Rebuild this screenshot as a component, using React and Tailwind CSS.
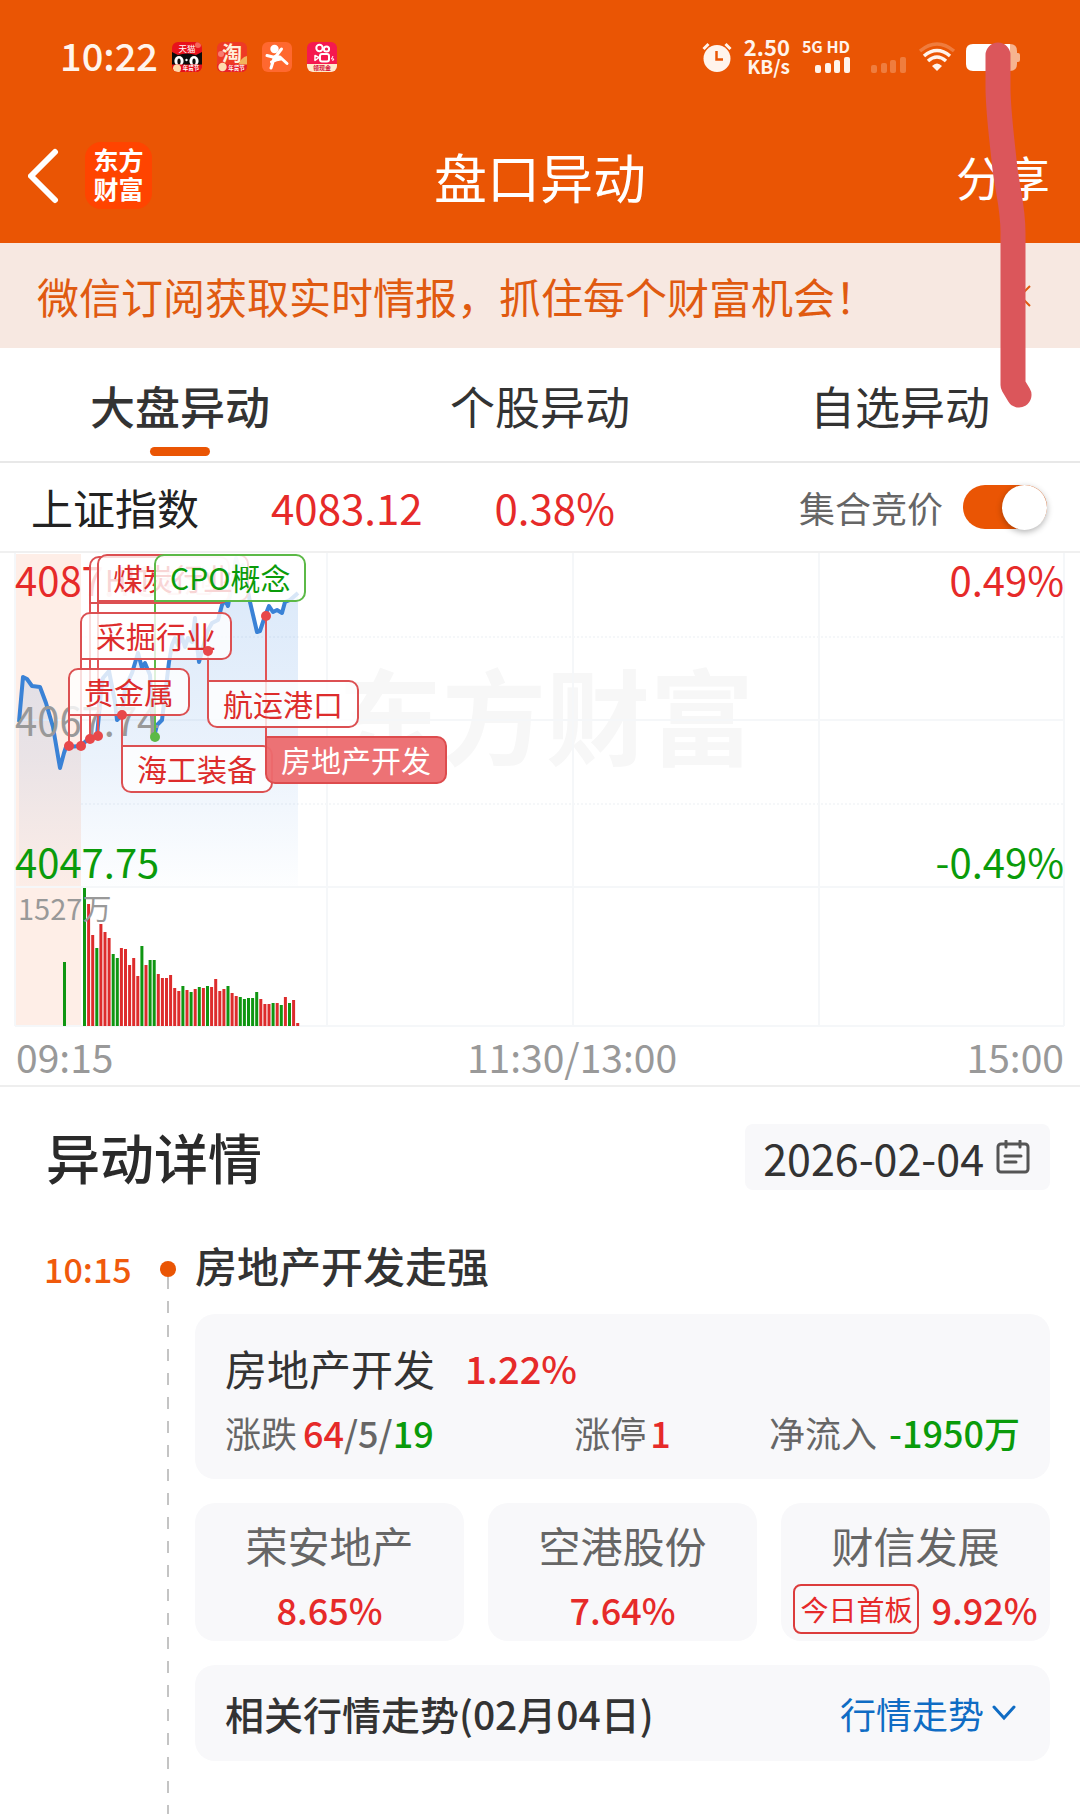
import { useState } from 'react';

const tabs = ['大盘异动', '个股异动', '自选异动'];

// Chart space is 1080 x 474, every position below is in those units
const CHART_W = 1080;
const CHART_H = 474;

const pricePoints =
  '19,169 23,124 27,126 32,133 40,134 46,150 53,174 60,215 64,200 66,194 81,193 88,186 97,183 101,139 103,125 109,118 115,149 117,167 122,162 125,135 132,120 138,100 142,115 145,110 150,122 152,159 154,184 157,172 162,167 165,142 169,109 172,92 175,85 178,92 182,84 185,94 188,85 192,89 195,65 197,92 199,109 203,95 207,79 212,70 218,67 222,52 225,47 228,53 230,42 236,5 240,19 243,12 250,49 257,79 260,78 265,63 269,53 273,59 277,57 282,60 285,49 290,47 298,40';

const volumes = [
  138, 122, 91, 78, 102, 94, 88, 72, 68, 78, 77, 61, 68, 50, 80, 61, 66, 66, 52, 48, 48, 51, 38, 35, 40, 36, 34,
  37, 39, 38, 40, 39, 47, 35, 37, 40, 33, 30, 29, 27, 28, 28, 34, 27, 22, 22, 23, 23, 21, 29, 23, 26, 3,
];
const volumeSides = 'grrgrrrggrrrrrgrggrrrrrrgrgrgrgrrrrgrrgggggrrrgrgrgrr';

const tags = [
  { name: 'HIT电池', x: 89, y: 3, dot: 186, up: true },
  { name: '煤炭行业', x: 97, y: 1, dot: 183, up: true },
  { name: 'CPO概念', x: 154, y: 1, dot: 184, up: true, green: true },
  { name: '采掘行业', x: 80, y: 59, dot: 193, up: true },
  { name: '贵金属', x: 68, y: 115, dot: 193, up: true },
  { name: '航运港口', x: 207, y: 127, dot: 98 },
  { name: '海工装备', x: 121, y: 192, dot: 162 },
  { name: '房地产开发', x: 265, y: 183, dot: 63, active: true },
];

const stocks = [
  { name: '荣安地产', change: '8.65%' },
  { name: '空港股份', change: '7.64%' },
  { name: '财信发展', change: '9.92%', badge: '今日首板' },
];

const AppIcons = () => (
  <div className="flex gap-[15px]">
    <svg className="w-[30px] h-[30px] rounded-md" viewBox="0 0 30 30">
      <rect width="30" height="30" fill="#e8121c" />
      <circle cx="26" cy="3" r="3" fill="#f4675d" />
      <path d="M0 10 L6 13 Q15 10 24 13 L30 10 V24 H0 Z" fill="#0b0b0b" />
      <ellipse cx="7" cy="19" rx="4.6" ry="5" fill="#fff" />
      <ellipse cx="22" cy="19" rx="4.6" ry="5" fill="#fff" />
      <ellipse cx="7" cy="19.500" rx="1.600" ry="3" fill="#0b0b0b" />
      <ellipse cx="22" cy="19.500" rx="1.600" ry="3" fill="#0b0b0b" />
      <circle cx="14.500" cy="18" r="1.200" fill="#fff" />
      <path d="M0 22.500 H30 V30 H0 Z" fill="#e60f1a" />
      <circle cx="5" cy="26.500" r="4" fill="#ffd9a8" />
      <text x="15" y="10" textAnchor="middle" fontSize="8.500" fill="#fff">天猫</text>
      <text x="19" y="28" textAnchor="middle" fontSize="5.500" fontWeight="700" fill="#fff">年货节</text>
    </svg>
    <svg className="w-[30px] h-[30px] overflow-visible" viewBox="0 0 30 30">
      <rect width="30" height="30" rx="6" fill="#ee3a25" />
      <circle cx="4" cy="12" r="3" fill="#f77d72" />
      <path d="M21 24 Q24 15 30 14 V24 Z" fill="#f2b45c" />
      <text x="15" y="19" textAnchor="middle" fontSize="20" fontWeight="700" fill="#fff1dc">淘</text>
      <path d="M0 22.500 H30 V24 Q30 30 24 30 H6 Q0 30 0 24 Z" fill="#e8202a" />
      <circle cx="5.500" cy="25" r="4.200" fill="#ffdcb0" />
      <text x="19.500" y="28" textAnchor="middle" fontSize="5.500" fontWeight="700" fill="#fff">年货节</text>
    </svg>
    <svg className="w-[30px] h-[30px] rounded-md" viewBox="0 0 30 30">
      <rect width="30" height="30" fill="#ff682f" />
      <circle cx="12.500" cy="7" r="4.200" fill="#fff" />
      <path d="M5 13.500 L13 15.500 L19.500 7 M13 14.500 L18 15 L25 21.500 M12.500 15 L9 26 M9.500 20 Q15 17 19 17" fill="none" stroke="#fff" strokeWidth="3" strokeLinecap="round" strokeLinejoin="round" />
    </svg>
    <svg className="w-[30px] h-[30px] rounded-md" viewBox="0 0 30 30">
      <rect width="30" height="30" fill="#f5194f" />
      <circle cx="12.500" cy="6" r="3.200" fill="none" stroke="#fff" strokeWidth="2" />
      <circle cx="19.500" cy="7" r="2.600" fill="none" stroke="#fff" strokeWidth="2" />
      <rect x="13" y="12" width="9" height="7.500" rx="2" fill="none" stroke="#fff" strokeWidth="2" />
      <path d="M12 15.500 L8 13.500 V18.500 Z" fill="none" stroke="#fff" strokeWidth="1.500" strokeLinejoin="round" />
      <path d="M26 14 L24.500 17 H27 L25.500 19" stroke="#fff" fill="none" />
      <path d="M0 22 H30 V30 H0 Z" fill="#ffeccb" />
      <text x="15" y="28" textAnchor="middle" fontSize="6" fontWeight="700" fill="#d3123f">领现金</text>
    </svg>
  </div>
);

const SignalBars = ({ className }) => (
  <svg className={className} viewBox="0 0 35 16" fill="#fff4ec">
    <rect x="0" y="8" width="6" height="8" rx="2" />
    <rect x="10" y="6" width="6" height="10" rx="2" />
    <rect x="19" y="3" width="6" height="13" rx="2" />
    <rect x="29" y="0" width="6" height="16" rx="2" />
  </svg>
);

const StatusBar = () => (
  <div className="flex h-[114px] items-center justify-between px-[60px] text-[#fff4ec]">
    <div className="flex items-center gap-3.5">
      <span className="pb-1 text-[38px] leading-[38px] font-medium">10:22</span>
      <AppIcons />
    </div>
    <div className="flex items-center">
      <svg className="h-[30px] w-[30px]" viewBox="0 0 30 30" fill="none">
        <circle cx="15" cy="16.500" r="13.500" fill="#fff4ec" />
        <path d="M1.500 7 L6.500 2 M28.500 7 L23.500 2" stroke="#fff4ec" strokeWidth="3" />
        <path d="M14.500 9 V17.500 H21" stroke="#ea5504" strokeWidth="2.500" />
      </svg>
      <div className="ml-3 flex flex-col items-end pb-0.5 font-bold">
        <span className="text-[22px] leading-[20px]">2.50</span>
        <span className="text-[19px] leading-[20px]">KB/s</span>
      </div>
      <div className="ml-3 flex flex-col items-end gap-1 pb-0.5">
        <span className="text-[16px] leading-[14px] font-bold">5G HD</span>
        <SignalBars className="h-4 w-[35px]" />
      </div>
      <SignalBars className="mt-4 ml-[21px] h-4 w-[35px] opacity-25" />
      <svg className="ml-3 h-[30px] w-[38px]" viewBox="0 0 38 30" fill="none" stroke="#fff4ec" strokeWidth="3.500">
        <path d="M2 9 Q19 -5 36 9" opacity="0.250" />
        <path d="M6 14 Q19 3 32 14" />
        <path d="M10 19 Q19 11 28 19" />
        <path d="M14 24 Q19 19 24 24 L19 29 Z" fill="#fff4ec" stroke="none" />
      </svg>
      <svg className="ml-2.5 h-[27px] w-[54px]" viewBox="0 0 54 27">
        <path d="M40 0 H44 Q51 0 51 7 V9 H52 Q54 9 54 11 V16 Q54 18 52 18 H51 V20 Q51 27 44 27 H40 Z" fill="#f6b490" />
        <path d="M7 0 H44 V27 H7 Q0 27 0 20 V7 Q0 0 7 0 Z" fill="#fff" />
      </svg>
    </div>
  </div>
);

const NavBar = () => (
  <div className="grid h-[129px] grid-cols-[1fr_auto_1fr] items-center px-7 pb-1.5 text-white">
    <div className="flex items-center gap-6">
      <button aria-label="返回">
        <svg className="h-[56px] w-[33px]" viewBox="0 0 33 56" fill="none" stroke="#fff" strokeWidth="6" strokeLinecap="round" strokeLinejoin="round">
          <path d="M27 4 L3 28 L27 52" />
        </svg>
      </button>
      <div className="flex h-[67px] w-[67px] flex-col items-center justify-center rounded-[16px] bg-[#ff4400] pb-1 text-[25px] leading-[29px] font-bold">
        <span>东方</span>
        <span>财富</span>
      </div>
    </div>
    <h1 className="text-[53px] leading-[60px]">盘口异动</h1>
    <button className="mr-0.5 justify-self-end text-[47px] leading-[60px]">分享</button>
  </div>
);

const Chart = () => (
  <div className="relative">
    <svg className="block w-full overflow-visible" viewBox={`0 0 ${CHART_W} ${CHART_H}`}>
      <defs>
        <linearGradient id="area" x1="0" y1="0" x2="0" y2="1">
          <stop offset="0" stopColor="#2f7fe0" stopOpacity="0.180" />
          <stop offset="0.600" stopColor="#2f7fe0" stopOpacity="0.100" />
          <stop offset="1" stopColor="#2f7fe0" stopOpacity="0.010" />
        </linearGradient>
      </defs>
      <rect x="16" y="1" width="65" height="332" fill="#feeee7" />
      <rect x="16" y="335" width="65" height="138" fill="#feeee7" />
      <text x="338" y="205" fontSize="104" fontWeight="700" fill="#f7f7f7">东方财富</text>
      <g stroke="#f5f7f9" strokeWidth="2">
        <path d="M15 0 V473 M327 0 V473 M573 0 V473 M819 0 V473 M1064 0 V473" />
        <path d="M15 167 H1064 M15 334 H1064 M15 473 H1064" />
        <path d="M81 84 H1064 M81 251 H1064" strokeDasharray="2 2" />
      </g>
      <polygon points={`${pricePoints} 298,333 19,333`} fill="url(#area)" />
      <polyline points={pricePoints} fill="none" stroke="#3a82d6" strokeWidth="4" strokeLinejoin="round" />
      <text x="15" y="43" fontSize="40" fill="#e62a29">4087.73</text>
      <text x="15" y="183" fontSize="40" fill="#999">4067.74</text>
      <text x="15" y="325" fontSize="40" fill="#0a9b0a">4047.75</text>
      <rect x="63" y="409" width="3" height="64" fill="#0f9612" />
      {volumes.map((h, i) => (
        <rect
          key={i}
          x={83 + i * 4.1}
          y={473 - h}
          width="3"
          height={h}
          fill={volumeSides[i] === 'g' ? '#0f9612' : '#dd2c2c'}
        />
      ))}
      <text x="18" y="367" fontSize="29" fill="#999">1527万</text>
      <text x="1064" y="43" fontSize="40" textAnchor="end" fill="#e62a29">0.49%</text>
      <text x="1064" y="325" fontSize="40" textAnchor="end" fill="#0a9b0a">-0.49%</text>
      {tags.map((t) => (
        <path key={t.name} d={`M${t.x + 1} ${t.y + 24} V${t.dot}`} stroke={t.green ? '#5cb947' : '#e25355'} strokeWidth="2" />
      ))}
    </svg>
    {tags.map((t) => (
      <button
        key={t.name}
        className={`absolute h-12 border-2 px-3.5 pb-0.5 text-[30px] leading-[42px] whitespace-nowrap ${
          t.up ? 'rounded-[10px] rounded-bl-none' : 'rounded-[10px] rounded-tl-none'
        } ${
          t.active
            ? 'border-[#dd4c4e] bg-[#ec6a6e]/95 text-white'
            : t.green
              ? 'border-[#5cb947] bg-white/80 text-[#0a9b0a]'
              : 'border-[#dc5052] bg-white/80 text-[#dd2c2c]'
        }`}
        style={{ left: `${(t.x / CHART_W) * 100}%`, top: `${(t.y / CHART_H) * 100}%` }}
      >
        {t.name}
      </button>
    ))}
    <svg className="pointer-events-none absolute inset-0 w-full" viewBox={`0 0 ${CHART_W} ${CHART_H}`}>
      {tags.map((t) => (
        <circle key={t.name} cx={t.x + 1} cy={t.dot} r="5" fill={t.green ? '#5cb947' : '#e8484a'} />
      ))}
    </svg>
  </div>
);

// Hand-drawn marker stroke over the top right corner
const Marker = () => (
  <svg className="pointer-events-none absolute top-0 right-0 h-[420px] w-[120px]" viewBox="0 0 120 420" fill="none">
    <path
      d="M38 55 V87 C38 110 42 140 44 160 C47 190 53 205 53 233 V385 L59 395"
      stroke="#db565b"
      strokeWidth="25"
      strokeLinecap="round"
      strokeLinejoin="round"
    />
  </svg>
);

const App = () => {
  const [tab, setTab] = useState(0);
  const [auction, setAuction] = useState(true);

  return (
    <div className="relative flex min-h-screen flex-col bg-white font-['Noto_Sans_CJK_SC',sans-serif] text-[#333]">
      <header className="bg-[#ea5504]">
        <StatusBar />
        <NavBar />
      </header>

      {/* Subscribe banner */}
      <div className="flex h-[105px] items-center justify-between bg-[#f7e8e1] pr-[49px] pl-[37px] text-[#e05a10]">
        <a href="#subscribe" className="text-[42px] leading-[60px]">微信订阅获取实时情报，抓住每个财富机会！</a>
        <button aria-label="关闭">
          <svg className="h-[22px] w-[22px]" viewBox="0 0 22 22" stroke="currentColor" strokeWidth="2">
            <path d="M1 1 L21 21 M21 1 L1 21" />
          </svg>
        </button>
      </div>

      {/* Tabs */}
      <nav className="grid h-[115px] grid-cols-3 border-b-2 border-[#e8e8e8]">
        {tabs.map((label, i) => (
          <button
            key={label}
            onClick={() => setTab(i)}
            className={`flex flex-col items-center pt-7 text-[45px] leading-[60px] ${tab === i ? 'font-medium' : ''}`}
          >
            {label}
            {tab === i && <span className="mt-[11px] h-[9px] w-[60px] rounded-full bg-[#ea5504]" />}
          </button>
        ))}
      </nav>

      {/* Index summary */}
      <div className="flex h-[90px] items-center justify-between border-b-2 border-[#f0f0f0] pr-[33px] pl-[31px]">
        <div className="flex gap-[72px] text-[42px] leading-[60px] text-[#e62a29]">
          <span className="text-[#222]">上证指数</span>
          <span>4083.12</span>
          <span>0.38%</span>
        </div>
        <label className="flex items-center gap-5 text-[36px] leading-[60px] text-[#666]">
          集合竞价
          <input
            type="checkbox"
            role="switch"
            className="peer sr-only"
            checked={auction}
            onChange={(e) => setAuction(e.target.checked)}
          />
          <span className="flex h-11 w-[84px] items-center rounded-full bg-gray-300 peer-checked:justify-end peer-checked:bg-[#ea5504]">
            <span className="h-[45px] w-[45px] rounded-full bg-white shadow-[0_2px_6px_rgba(0,0,0,0.3)]" />
          </span>
        </label>
      </div>

      <Chart />
      <div className="flex h-[60px] items-center justify-between border-b-2 border-[#eee] px-4 text-[39px] leading-[58px] text-[#999]">
        <span>09:15</span>
        <span className="ml-16">11:30/13:00</span>
        <span>15:00</span>
      </div>

      {/* Detail */}
      <div className="mb-1 flex h-[140px] items-center justify-between pr-[30px] pl-[46px]">
        <h2 className="text-[54px] leading-[60px] font-medium text-[#2a2a2a]">异动详情</h2>
        <button className="flex h-[66px] items-center gap-3 rounded-lg bg-[#f8f8fa] pr-5 pl-[18px] text-[43px] leading-[60px]">
          2026-02-04
          <svg className="h-[34px] w-[34px]" viewBox="0 0 34 34" fill="none" stroke="#555" strokeWidth="3" strokeLinecap="round">
            <rect x="2" y="4" width="30" height="28" rx="3" />
            <path d="M10 1 V7 M24 1 V7 M9 16 H25 M9 22 H20" />
          </svg>
        </button>
      </div>

      <div className="flex flex-1 pr-[30px]">
        <time className="w-[158px] shrink-0 pt-2 pl-[44px] text-[34px] leading-[60px] font-medium text-[#f05a0c]">
          10:15
        </time>
        <div className="flex w-[37px] shrink-0 flex-col items-start pt-[30px]">
          <span className="ml-[2px] h-4 w-4 rounded-full bg-[#ea5504]" />
          <svg className="ml-[9px] h-0 w-[2px] flex-1">
            <line x1="1" y1="0" x2="1" y2="100%" stroke="#c4c4c4" strokeWidth="2" strokeDasharray="12 12" />
          </svg>
        </div>
        <div className="flex min-w-0 flex-1 flex-col gap-6 pb-[53px]">
          <h3 className="h-[59px] pt-1 text-[42px] leading-[60px] font-medium">房地产开发走强</h3>

          <div className="h-[165px] rounded-[20px] bg-[#f8f8fa] px-[30px] pt-6">
            <div className="flex gap-[30px] text-[42px] leading-[60px]">
              <span>房地产开发</span>
              <span className="text-[38px] font-medium text-[#e62a29]">1.22%</span>
            </div>
            <div className="mt-1 grid grid-cols-3 text-[36px] leading-[60px] text-[#666]">
              <span className="flex gap-1.5">
                涨跌
                <span className="font-medium">
                  <span className="text-[#e62a29]">64</span>/5/<span className="text-[#0a9b0a]">19</span>
                </span>
              </span>
              <span className="flex justify-center gap-1">
                涨停<span className="font-medium text-[#e62a29]">1</span>
              </span>
              <span className="flex justify-end gap-3 whitespace-nowrap">
                净流入<span className="font-medium text-[#0a9b0a]">-1950万</span>
              </span>
            </div>
          </div>

          <div className="grid grid-cols-3 gap-6">
            {stocks.map((s) => (
              <div key={s.name} className="flex h-[138px] flex-col items-center rounded-[20px] bg-[#f8f8fa] pt-3">
                <span className="text-[42px] leading-[60px] text-[#666]">{s.name}</span>
                <span className="mt-1 flex items-center gap-3 text-[36px] leading-[60px] font-medium text-[#e62a29]">
                  {s.badge && (
                    <span className="rounded-lg border-2 border-[#dc3c3c] px-[5px] text-[28px] leading-[46px] font-normal whitespace-nowrap">
                      {s.badge}
                    </span>
                  )}
                  {s.change}
                </span>
              </div>
            ))}
          </div>

          <div className="flex h-24 items-center justify-between rounded-[20px] bg-[#f8f8fa] pr-[34px] pl-[30px]">
            <span className="text-[39px] leading-[60px] font-medium">相关行情走势(02月04日)</span>
            <button className="flex items-center gap-2 text-[36px] leading-[60px] text-[#0f6cc4]">
              行情走势
              <svg className="h-4 w-6" viewBox="0 0 24 16" fill="none" stroke="currentColor" strokeWidth="3" strokeLinecap="round">
                <path d="M2 2 L12 13 L22 2" />
              </svg>
            </button>
          </div>
        </div>
      </div>

      <Marker />
    </div>
  );
};

export default App;
